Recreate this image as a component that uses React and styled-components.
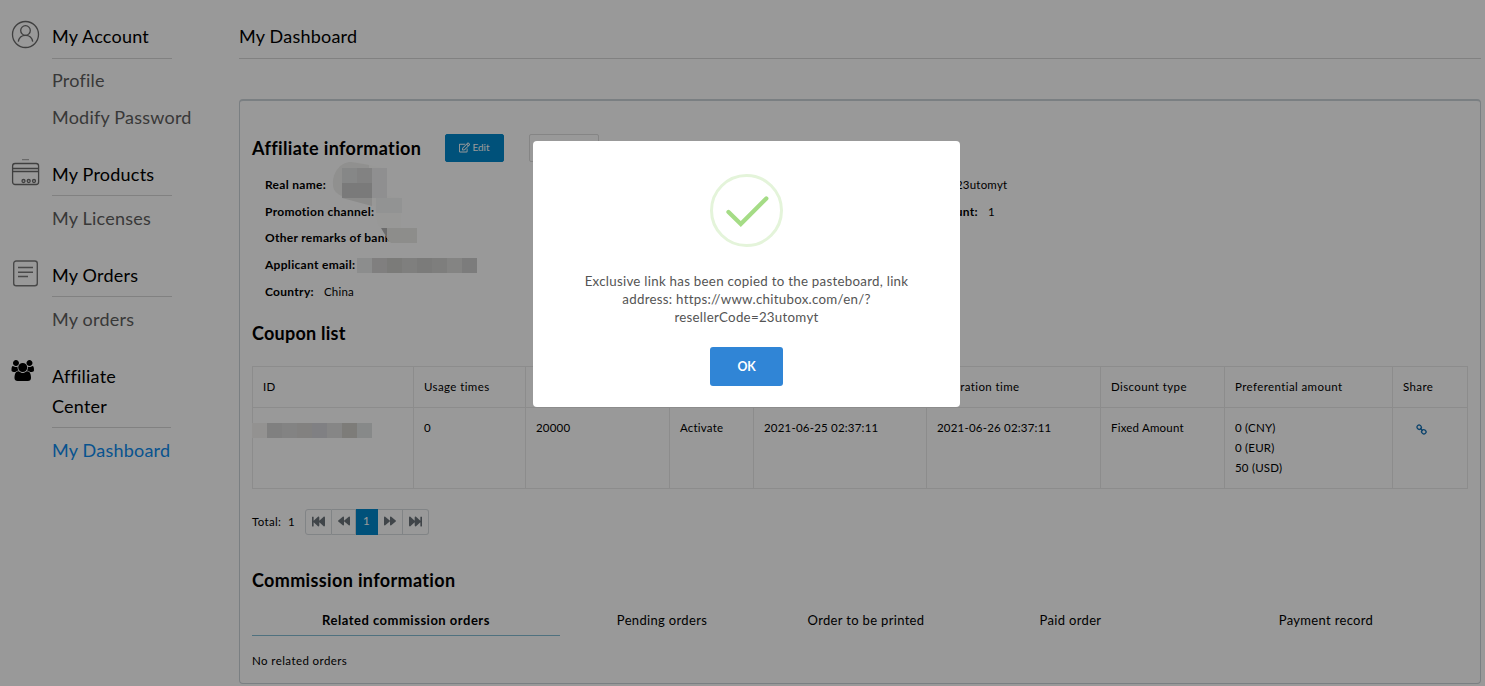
import React from 'react';
import styled, { createGlobalStyle, css } from 'styled-components';
import { FaRegEdit, FaFastBackward, FaBackward, FaForward, FaFastForward } from 'react-icons/fa';

const GlobalStyle = createGlobalStyle`
  * { box-sizing: border-box; }
  body {
    margin: 0;
    background: #fff;
    color: #000;
    font: 11.5px/20px Lato, 'Open Sans', sans-serif;
    letter-spacing: 0.2px;
    overflow: hidden;
  }
  h1, h2, p { margin: 0; font-weight: 400; }
`;

const Page = styled.div`
  display: flex;
  height: 686px;
  overflow: hidden;
`;

/* ---------- side navigation ---------- */

const Sidebar = styled.nav`
  width: 239px;
  flex: none;
  padding-top: 22px;
  font-size: 18px;
  letter-spacing: 0.22px;
`;

const Group = styled.section`
  display: grid;
  grid-template-columns: 52px 1fr;
  margin-bottom: 24px;
`;

const GroupIcon = styled.div`
  padding-left: 11px;
  height: 0;
  svg { display: block; margin-top: ${(p) => p.$shift || 0}px; }
`;

const GroupTitle = styled.div`
  width: ${(p) => p.$width || 120}px;
  line-height: 30px;
  margin: -1px 0 ${(p) => p.$gap || 4}px;
  padding-bottom: ${(p) => p.$pad || 6}px;
  border-bottom: 1px solid #d8d8d8;
`;

const NavItem = styled.div`
  line-height: 37px;
  white-space: nowrap;
  color: ${(p) => (p.$active ? '#0d8bee' : '#5e5e5e')};
`;

/* ---------- main panel ---------- */

const Main = styled.main`
  width: 1242px;
  flex: none;
`;

const Title = styled.h1`
  height: 59px;
  padding-top: 21px;
  border-bottom: 1px solid #d8d8d8;
  font-size: 18px;
  line-height: 30px;
  letter-spacing: 0.22px;
`;

const Box = styled.section`
  margin-top: 40px;
  height: 585px;
  padding: 33px 12px 0;
  border: 1px solid #ccd4d9;
  border-top-width: 2px;
  border-radius: 4px;
`;

const Heading = styled.h2`
  margin-top: ${(p) => p.$top || 0}px;
  font-size: 18px;
  font-weight: 700;
  line-height: 28px;
  letter-spacing: ${(p) => p.$ls || 0.35}px;
`;

const HeaderRow = styled.div`
  display: flex;
  height: 28px;
  ${Heading} { width: 193px; }
`;

const Button = styled.button`
  width: ${(p) => p.$width}px;
  height: 28px;
  margin-right: 25px;
  display: flex;
  align-items: center;
  justify-content: center;
  gap: 2px;
  padding: 0 0 2px;
  border: 1px solid ${(p) => (p.$primary ? '#0088cc' : '#dedede')};
  border-radius: 2px;
  background: ${(p) => (p.$primary ? '#0088cc' : '#fff')};
  color: ${(p) => (p.$primary ? '#fff' : '#333')};
  font: 10px Lato, sans-serif;
`;

const InfoGrid = styled.div`
  display: grid;
  grid-template-columns: 608px 1fr;
  grid-auto-rows: 26.7px;
  padding: 10px 0 0 13px;
  line-height: 26px;
`;

const Info = styled.div`
  position: relative;
  display: flex;
  white-space: nowrap;
`;

const Label = styled.b`
  width: ${(p) => (p.$width ? `${p.$width}px` : 'auto')};
  margin-right: 10px;
  font-size: 12px;
  text-align: right;
  letter-spacing: 0.3px;
`;

const Redaction = styled.svg`
  position: absolute;
  left: ${(p) => p.$x}px;
  top: ${(p) => p.$y}px;
  display: block;
  z-index: 1;
`;

const Table = styled.div`
  margin-top: 19px;
  border: solid #e9e9e9;
  border-width: 1px 0 0 1px;
`;

const Row = styled.div`
  display: grid;
  grid-template-columns: 161px 112px 144px 84px 173px 174px 124px 168px 75px;
  height: ${(p) => p.$height}px;
  letter-spacing: ${(p) => p.$ls || 0.2}px;
`;

const Cell = styled.div`
  position: relative;
  padding: 10px 0 0 10px;
  border: solid #e9e9e9;
  border-width: 0 1px 1px 0;
  white-space: nowrap;
`;

const ShareLink = styled.span`
  display: block;
  padding: 6px 0 0 13px;
  svg { display: block; }
`;

const Pager = styled.div`
  display: flex;
  height: 26px;
  margin-top: 20px;
`;

const Total = styled.div`
  width: 53px;
  line-height: 26px;
  letter-spacing: 0.35px;
  white-space: pre;
`;

const PageButton = styled.div`
  width: ${(p) => p.$width}px;
  display: flex;
  align-items: center;
  justify-content: center;
  padding-bottom: 2px;
  border: 1px solid #d8dcdf;
  border-left-width: ${(p) => (p.$first ? 1 : 0)}px;
  border-radius: ${(p) => (p.$first ? '3px 0 0 3px' : p.$last ? '0 3px 3px 0' : 0)};
  color: #6c747b;
  ${(p) => p.$current && css`
    border-color: #0088cc;
    background: #0088cc;
    color: #fff;
  `}
`;

const Tabs = styled.div`
  display: grid;
  grid-template-columns: 308px 204px 204px 205px 306px;
  width: 1227px;
  height: 31px;
  margin: 11px 0 15px;
  font-size: 13px;
  line-height: 30px;
  text-align: center;
`;

const Tab = styled.div`
  letter-spacing: ${(p) => (p.$active ? 0.5 : 0.33)}px;
  font-weight: ${(p) => (p.$active ? 700 : 400)};
  border-bottom: 1px solid ${(p) => (p.$active ? '#84bcd4' : 'transparent')};
`;

const Empty = styled.p`
  letter-spacing: 0.42px;
`;

/* ---------- dialog ---------- */

const Overlay = styled.div`
  position: fixed;
  inset: 0;
  z-index: 5;
  display: flex;
  align-items: flex-start;
  justify-content: center;
  padding: 141px 0 0 8px;
  background: rgba(0, 0, 0, 0.4);
`;

const Dialog = styled.div`
  width: 427px;
  height: 266px;
  padding-top: 33px;
  display: flex;
  flex-direction: column;
  align-items: center;
  border-radius: 4px;
  background: #fff;
  text-align: center;
`;

const Message = styled.p`
  margin: 25px 0 21px;
  color: #545454;
  font-size: 13.3px;
  line-height: 18px;
  letter-spacing: 0.27px;
`;

const OkButton = styled.button`
  width: 73px;
  height: 39px;
  border: 0;
  border-radius: 3px;
  background: #3085d6;
  color: #fff;
  font: 700 12.3px Lato, sans-serif;
  letter-spacing: -0.3px;
`;

const UserIcon = () => (
  <svg width="29" height="29" viewBox="0 0 29 29" fill="none" stroke="#6b6b6b" strokeWidth="1.3">
    <circle cx="14.5" cy="14.5" r="13" />
    <circle cx="14.5" cy="10.5" r="4.8" />
    <path d="M7.3 21.7c.6-4 3.2-6.4 7.2-6.4s6.6 2.4 7.2 6.4" />
  </svg>
);

const CardIcon = () => (
  <svg width="29" height="27" viewBox="0 0 29 27" fill="none" stroke="#6b6b6b" strokeWidth="1.3">
    <path d="M11 .6h7" stroke="#b0b0b0" />
    <rect x="1.6" y="4.5" width="26" height="21" rx="2.5" />
    <path d="M1.6 9.5h26M1.6 12.5h26" />
    <circle cx="12.500" cy="22" r="1.500" />
    <circle cx="17.700" cy="22" r="1.500" />
    <circle cx="23" cy="22" r="1.500" />
  </svg>
);

const OrderIcon = () => (
  <svg width="29" height="27" viewBox="0 0 29 27" fill="none" stroke="#7a7a7a" strokeWidth="1.4">
    <rect x="2.7" y="1" width="23.6" height="24.8" rx="2.5" />
    <path d="M7 7.5h15M7 12.200h15M7 16.500h10" />
  </svg>
);

const UsersIcon = () => (
  <svg width="23" height="21" viewBox="-40 0 1960 1792">
    <path d="M593 896q-162 5-265 128h-134q-82 0-138-40.5t-56-118.5q0-353 124-353 6 0 43.5 21t97.5 42.5 119 21.5q67 0 133-23-5 37-5 66 0 139 81 256zm1071 637q0 120-73 189.5t-194 69.5h-874q-121 0-194-69.5t-73-189.5q0-53 3.5-103.5t14-109 26.5-108.5 43-97.5 62-81 85.5-53.5 111.5-20q10 0 43 21.5t73 48 107 48 135 21.5 135-21.5 107-48 73-48 43-21.5q61 0 111.5 20t85.5 53.5 62 81 43 97.500 26.500 108.500 14 109 3.500 103.500zm-1024-1277q0 106-75 181t-181 75-181-75-75-181 75-181 181-75 181 75 75 181zm704 384q0 159-112.500 271.500t-271.500 112.500-271.500-112.500-112.500-271.500 112.500-271.500 271.500-112.500 271.500 112.500 112.500 271.500zm576 225q0 78-56 118.500t-138 40.500h-134q-103-123-265-128 81-117 81-256 0-29-5-66 66 23 133 23 59 0 119-21.500t97.500-42.500 43.500-21q124 0 124 353zm-128-609q0 106-75 181t-181 75-181-75-75-181 75-181 181-75 181 75 75 181z" />
  </svg>
);

const ChainIcon = () => (
  <svg width="11" height="11" viewBox="0 0 11 11" fill="none" stroke="#1470b4" strokeWidth="1.3">
    <rect x="1" y="1.200" width="4.400" height="4" rx="1.700" transform="rotate(45 3.200 3.200)" />
    <rect x="5.600" y="5.800" width="4.400" height="4" rx="1.700" transform="rotate(45 7.800 7.800)" />
    <path d="M4 4l3 3" />
  </svg>
);

const CheckIcon = () => (
  <svg width="73" height="73" viewBox="0 0 73 73" fill="none">
    <circle cx="36.5" cy="36.5" r="35" stroke="#e4f4da" strokeWidth="3" />
    <path d="M18.500 38 30.800 50 56.300 24.500" stroke="#a5dc86" strokeWidth="4.300" strokeLinecap="round" />
  </svg>
);

const Mosaic = ({ x, y, colors }) => (
  <Redaction $x={x} $y={y} width={colors.length * 15} height="15">
    {colors.map((c, i) => <rect key={i} x={i * 15} width="15" height="15" fill={c} />)}
  </Redaction>
);

const NameMosaic = () => (
  <Redaction $x={66} $y={-10} width="88" height="86">
    <path d="M2 26C1 10 10 0 20 0C35 0 43 6 55 6V34L70 36V66L85 66V81H59L46 60 44 44 12 36Z" fill="#fdfdfc" />
    <path d="M2 23C1 10 10 0 20 0L38 3V6H11V34C6 32 2 28 2 23Z" fill="#f0f0ee" />
    <rect x="11" y="6" width="15" height="15" fill="#e0e1e1" />
    <rect x="26" y="6" width="15" height="15" fill="#d9d9d9" />
    <rect x="11" y="21" width="30" height="15" fill="#cbcbcb" />
    <rect x="41" y="6" width="15" height="30" fill="#eeeff0" />
    <path d="M11 36H41V44Z" fill="#e8e8e6" />
    <path d="M45 36H71V51H45Z" fill="#f4f5f5" />
    <path d="M50 66H56V76Z" fill="#b5b5b5" />
    <path d="M56 66H86V81H60L56 76Z" fill="#ebebe8" />
  </Redaction>
);

const HEADERS = ['ID', 'Usage times', 'Total times', 'Status', 'Start time', 'Expiration time', 'Discount type', 'Preferential amount', 'Share'];

export default function App() {
  return (
    <>
      <GlobalStyle />
      <Page>
        <Sidebar>
          <Group>
            <GroupIcon $shift={-2}><UserIcon /></GroupIcon>
            <div>
              <GroupTitle $pad={7} $gap={3}>My Account</GroupTitle>
              <NavItem>Profile</NavItem>
              <NavItem>Modify Password</NavItem>
            </div>
          </Group>
          <Group>
            <GroupIcon $shift={-1}><CardIcon /></GroupIcon>
            <div>
              <GroupTitle>My Products</GroupTitle>
              <NavItem>My Licenses</NavItem>
            </div>
          </Group>
          <Group>
            <GroupIcon $shift={-1}><OrderIcon /></GroupIcon>
            <div>
              <GroupTitle>My Orders</GroupTitle>
              <NavItem>My orders</NavItem>
            </div>
          </Group>
          <Group>
            <GroupIcon $shift={-2}><UsersIcon /></GroupIcon>
            <div>
              <GroupTitle $width={119}>Affiliate<br />Center</GroupTitle>
              <NavItem $active>My Dashboard</NavItem>
            </div>
          </Group>
        </Sidebar>
        <Main>
          <Title>My Dashboard</Title>
          <Box>
            <HeaderRow>
              <Heading>Affiliate information</Heading>
              <Button $primary $width={59}><FaRegEdit size={11} />Edit</Button>
              <Button $width={70}>Share</Button>
            </HeaderRow>
            <InfoGrid>
              <Info><Label>Real name:</Label><NameMosaic /></Info>
              <Info><Label $width={73}>Reseller code:</Label>23utomyt</Info>
              <Info><Label>Promotion channel:</Label></Info>
              <Info><Label $width={105}>Coupon count:</Label>1</Info>
              <Info><Label>Other remarks of bank</Label></Info>
              <Info />
              <Info>
                <Label>Applicant email:</Label>
                <Mosaic x={92} y={6} colors={['#eaebeb', '#d6d4d4', '#cecdca', '#d4d4d3', '#cecdcc', '#d2d2d1', '#dcdcda', '#cfcfcf']} />
              </Info>
              <Info />
              <Info><Label>Country:</Label>China</Info>
            </InfoGrid>
            <Heading $top={14} $ls={0.25}>Coupon list</Heading>
            <Table>
              <Row $height={41} $ls={0.4}>
                {HEADERS.map((h) => <Cell key={h}>{h}</Cell>)}
              </Row>
              <Row $height={81}>
                <Cell><Mosaic x={-1} y={15} colors={['#f5f4f2', '#d6d6d6', '#dadada', '#d9d8d6', '#d5d6da', '#dfdfdf', '#d0cfca', '#e2e4e4']} /></Cell>
                <Cell>0</Cell>
                <Cell>20000</Cell>
                <Cell>Activate</Cell>
                <Cell>2021-06-25 02:37:11</Cell>
                <Cell>2021-06-26 02:37:11</Cell>
                <Cell>Fixed Amount</Cell>
                <Cell>0 (CNY)<br />0 (EUR)<br />50 (USD)</Cell>
                <Cell><ShareLink><ChainIcon /></ShareLink></Cell>
              </Row>
            </Table>
            <Pager>
              <Total>Total:  1</Total>
              <PageButton $first $width={27}><FaFastBackward size={13} /></PageButton>
              <PageButton $width={24}><FaBackward size={12} /></PageButton>
              <PageButton $current $width={22}>1</PageButton>
              <PageButton $width={25}><FaForward size={12} /></PageButton>
              <PageButton $last $width={26}><FaFastForward size={13} /></PageButton>
            </Pager>
            <Heading $top={31}>Commission information</Heading>
            <Tabs>
              <Tab $active>Related commission orders</Tab>
              <Tab>Pending orders</Tab>
              <Tab>Order to be printed</Tab>
              <Tab>Paid order</Tab>
              <Tab>Payment record</Tab>
            </Tabs>
            <Empty>No related orders</Empty>
          </Box>
        </Main>
      </Page>
      <Overlay>
        <Dialog>
          <CheckIcon />
          <Message>
            Exclusive link has been copied to the pasteboard, link<br />
            address: https://www.chitubox.com/en/?<br />
            resellerCode=23utomyt
          </Message>
          <OkButton>OK</OkButton>
        </Dialog>
      </Overlay>
    </>
  );
}
